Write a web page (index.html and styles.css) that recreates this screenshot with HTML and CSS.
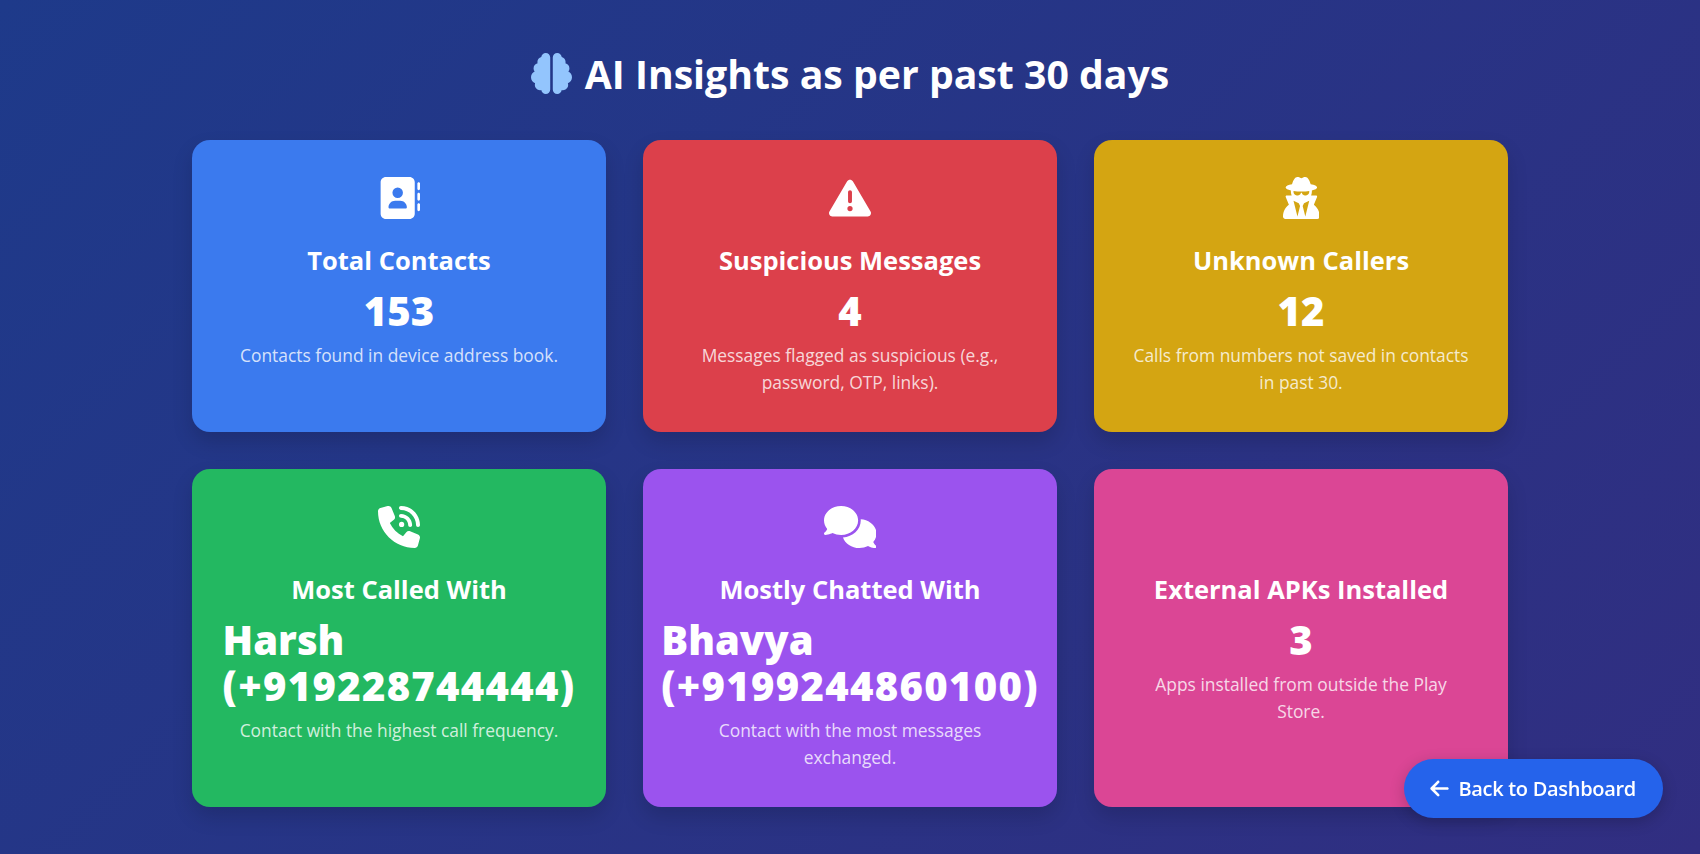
FILE: index.html
```html
<!DOCTYPE html>
<html lang="en">
<head>
    <meta charset="UTF-8">
    <meta name="viewport" content="width=device-width, initial-scale=1.0">
    <title>AI Insights</title>
    <link rel="stylesheet" href="styles.css">
</head>
<body>
    <div class="insights-page">
        <h1 class="page-title">
            <svg class="brain-icon" viewBox="0 0 512 512"><path d="M184 0c30.9 0 56 25.1 56 56V456c0 30.9-25.1 56-56 56c-28.9 0-52.7-21.9-55.7-50.1c-5.2 1.4-10.7 2.1-16.3 2.1c-35.3 0-64-28.7-64-64c0-7.4 1.3-14.6 3.6-21.2C21.4 367.4 0 338.2 0 304c0-31.9 18.7-59.5 45.8-72.3C37.1 220.8 32 207 32 192c0-30.7 21.6-56.3 50.4-62.6C80.8 123.9 80 118 80 112c0-29.9 20.6-55.1 48.3-62.1C131.3 21.9 155.1 0 184 0zM328 0c28.9 0 52.6 21.9 55.7 49.9c27.8 7 48.3 32.1 48.3 62.1c0 6-.8 11.9-2.4 17.4c28.8 6.2 50.4 31.9 50.4 62.6c0 15-5.1 28.8-13.8 39.7C493.3 244.5 512 272.1 512 304c0 34.2-21.4 63.4-51.6 74.8c2.3 6.6 3.6 13.8 3.6 21.2c0 35.3-28.7 64-64 64c-5.6 0-11.1-.7-16.3-2.1c-3 28.2-26.8 50.1-55.7 50.1c-30.9 0-56-25.1-56-56V56c0-30.9 25.1-56 56-56z"/></svg>
            <span>AI Insights as per past 30 days</span>
        </h1>

        <div class="cards-grid">
            <div class="card card-blue">
                <svg class="card-icon" viewBox="0 0 512 512"><path d="M96 0C60.7 0 32 28.7 32 64V448c0 35.3 28.7 64 64 64H384c35.3 0 64-28.7 64-64V64c0-35.3-28.7-64-64-64H96zM208 288h64c44.2 0 80 35.8 80 80c0 8.8-7.2 16-16 16H144c-8.8 0-16-7.2-16-16c0-44.2 35.8-80 80-80zm-32-96a64 64 0 1 1 128 0 64 64 0 1 1 -128 0zM512 80c0-8.8-7.2-16-16-16s-16 7.2-16 16v64c0 8.8 7.2 16 16 16s16-7.2 16-16V80zM496 192c-8.8 0-16 7.2-16 16v64c0 8.8 7.2 16 16 16s16-7.2 16-16V208c0-8.8-7.2-16-16-16zm16 144c0-8.8-7.2-16-16-16s-16 7.2-16 16v64c0 8.8 7.2 16 16 16s16-7.2 16-16V336z"/></svg>
                <h2 class="card-title">Total Contacts</h2>
                <div class="card-value">153</div>
                <p class="card-text">Contacts found in device address book.</p>
            </div>

            <div class="card card-red">
                <svg class="card-icon" viewBox="0 0 512 512"><path d="M256 32c14.2 0 27.3 7.5 34.5 19.8l216 368c7.3 12.4 7.3 27.7 .2 40.1S486.3 480 472 480H40c-14.3 0-27.6-7.7-34.7-20.1s-7-27.8 .2-40.1l216-368C228.7 39.5 241.8 32 256 32zm0 128c-13.3 0-24 10.7-24 24V296c0 13.3 10.7 24 24 24s24-10.7 24-24V184c0-13.3-10.7-24-24-24zm32 224a32 32 0 1 0 -64 0 32 32 0 1 0 64 0z"/></svg>
                <h2 class="card-title">Suspicious Messages</h2>
                <div class="card-value">4</div>
                <p class="card-text">Messages flagged as suspicious (e.g., password, OTP, links).</p>
            </div>

            <div class="card card-yellow">
                <svg class="card-icon" viewBox="0 0 448 512"><path d="M224 16c-6.7 0-10.8-2.8-15.5-6.1C201.9 5.4 194 0 176 0c-30.5 0-52 43.7-66 89.4C62.7 98.1 32 112.2 32 128c0 14.3 25 27.1 64.6 35.9c-.4 4-.6 8-.6 12.1c0 17 3.3 33.2 9.3 48H45.4C38 224 32 230 32 237.4c0 1.7 .3 3.4 1 5l38.8 96.9C28.2 371.8 0 423.8 0 482.3C0 498.7 13.3 512 29.7 512H418.3c16.4 0 29.7-13.3 29.7-29.7c0-58.5-28.2-110.4-71.7-143L415 242.4c.6-1.6 1-3.3 1-5c0-7.4-6-13.4-13.4-13.4H342.7c6-14.8 9.3-31 9.3-48c0-4.1-.2-8.1-.6-12.1C391 155.1 416 142.3 416 128c0-15.8-30.7-29.9-78-38.6C324 43.7 302.5 0 272 0c-18 0-25.9 5.4-32.5 9.9c-4.8 3.3-8.8 6.1-15.5 6.1zm56 208H267.6c-16.5 0-31.1-10.6-36.3-26.2c-2.3-7-12.2-7-14.5 0c-5.2 15.6-19.9 26.2-36.3 26.2H168c-22.1 0-40-17.9-40-40V169.6c28.2 4.1 61 6.4 96 6.4s67.8-2.3 96-6.4V184c0 22.1-17.9 40-40 40zm-88 96l16 32L176 480 128 288l64 32zm128-32L272 480 240 352l16-32 64-32z"/></svg>
                <h2 class="card-title">Unknown Callers</h2>
                <div class="card-value">12</div>
                <p class="card-text">Calls from numbers not saved in contacts in past 30.</p>
            </div>

            <div class="card card-green">
                <svg class="card-icon" viewBox="0 0 512 512"><path d="M280 0C408.1 0 512 103.9 512 232c0 13.3-10.7 24-24 24s-24-10.7-24-24c0-101.6-82.4-184-184-184c-13.3 0-24-10.7-24-24s10.7-24 24-24zm8 192a32 32 0 1 1 0 64 32 32 0 1 1 0-64zm-32-72c0-13.3 10.7-24 24-24c75.1 0 136 60.9 136 136c0 13.3-10.7 24-24 24s-24-10.7-24-24c0-48.6-39.4-88-88-88c-13.3 0-24-10.7-24-24zM117.5 1.4c19.4-5.3 39.7 4.6 47.4 23.2l40 96c6.8 16.3 2.1 35.2-11.6 46.3L144 207.3c33.3 70.4 90.3 127.4 160.7 160.7L345 318.7c11.2-13.7 30-18.4 46.3-11.6l96 40c18.6 7.7 28.5 28 23.2 47.4l-24 88C481.8 499.9 466 512 448 512C200.6 512 0 311.4 0 64C0 46 12.1 30.2 29.5 25.4l88-24z"/></svg>
                <h2 class="card-title">Most Called With</h2>
                <div class="card-value">Harsh<br><span class="card-phone">(+919228744444)</span></div>
                <p class="card-text">Contact with the highest call frequency.</p>
            </div>

            <div class="card card-purple">
                <svg class="card-icon" viewBox="0 0 640 512"><path d="M208 352c114.9 0 208-78.8 208-176S322.9 0 208 0S0 78.8 0 176c0 38.6 14.7 74.3 39.6 103.4c-3.5 9.4-8.7 17.7-14.2 24.7c-4.8 6.2-9.7 11-13.3 14.3c-1.8 1.6-3.3 2.9-4.3 3.7c-.5 .4-.9 .7-1.1 .8l-.2 .2 0 0 0 0C1 327.2-1.4 334.4 .8 340.9S9.1 352 16 352c21.8 0 43.8-5.6 62.1-12.5c9.2-3.5 17.8-7.4 25.3-11.4C134.1 343.3 169.8 352 208 352zM448 176c0 112.3-99.1 196.9-216.5 207C255.8 457.4 336.4 512 432 512c38.2 0 73.9-8.7 104.7-23.9c7.5 4 16 7.9 25.2 11.4c18.3 6.9 40.3 12.5 62.1 12.5c6.9 0 13.1-4.5 15.2-11.1c2.1-6.6-.2-13.8-5.8-17.9l0 0 0 0-.2-.2c-.2-.2-.6-.4-1.1-.8c-1-.8-2.5-2-4.3-3.7c-3.6-3.3-8.5-8.1-13.3-14.3c-5.5-7-10.7-15.4-14.2-24.7c24.9-29 39.6-64.7 39.6-103.4c0-92.8-84.9-168.9-192.6-175.5c.4 5.1 .6 10.3 .6 15.5z"/></svg>
                <h2 class="card-title">Mostly Chatted With</h2>
                <div class="card-value">Bhavya<br><span class="card-phone">(+9199244860100)</span></div>
                <p class="card-text">Contact with the most messages exchanged.</p>
            </div>

            <div class="card card-pink">
                <div class="card-icon"></div>
                <h2 class="card-title">External APKs Installed</h2>
                <div class="card-value">3</div>
                <p class="card-text">Apps installed from outside the Play Store.</p>
            </div>
        </div>
    </div>

    <a class="back-button" href="#">
        <svg class="back-icon" viewBox="0 0 448 512"><path d="M9.4 233.4c-12.5 12.5-12.5 32.8 0 45.3l160 160c12.5 12.5 32.8 12.5 45.3 0s12.5-32.8 0-45.3L109.2 288 416 288c17.7 0 32-14.3 32-32s-14.3-32-32-32l-306.7 0L214.6 118.6c12.5-12.5 12.5-32.8 0-45.3s-32.8-12.5-45.3 0l-160 160z"/></svg>
        <span>Back to Dashboard</span>
    </a>
</body>
</html>
```

FILE: styles.css
```css
* {
    box-sizing: border-box;
}

body {
    margin: 0;
    min-height: 100vh;
    font-family: 'Open Sans', 'Noto Sans', sans-serif;
    background: linear-gradient(135deg, #1e3a8a, #312e81);
    color: #fff;
}

.insights-page {
    width: 1316px;
    margin: 0 auto;
    padding: 46px 0 46px;
}

.page-title {
    display: flex;
    justify-content: center;
    align-items: center;
    gap: 13px;
    height: 55px;
    margin: 0 0 39px;
    font-size: 39.2px;
    font-weight: 700;
}

.brain-icon {
    width: 41px;
    height: 41px;
    fill: #93c5fd;
}

.cards-grid {
    display: grid;
    grid-template-columns: repeat(3, 414px);
    justify-content: space-between;
    row-gap: 37px;
}

.card {
    display: flex;
    flex-direction: column;
    align-items: center;
    padding: 37px 39px 36px;
    border-radius: 18px;
    text-align: center;
    box-shadow: 0 10px 20px rgba(0, 0, 0, 0.15);
}

.card-blue { background-color: #3b7aee; }
.card-red { background-color: #dc404b; }
.card-yellow { background-color: #d4a512; }
.card-green { background-color: #23b861; }
.card-purple { background-color: #9b53ee; }
.card-pink { background-color: #db4695; }

.card-icon {
    height: 42px;
    fill: #fff;
    margin-bottom: 24px;
}

.card-title {
    margin: 0 0 11px;
    font-size: 25.5px;
    line-height: 34px;
    font-weight: 700;
    white-space: nowrap;
}

.card-value {
    margin-bottom: 8px;
    font-size: 40px;
    line-height: 46px;
    font-weight: 800;
    text-align: left;
    white-space: nowrap;
}

.card-phone {
    letter-spacing: 1.3px;
}

.card-text {
    margin: 0;
    font-size: 17.4px;
    line-height: 27px;
    color: rgba(255, 255, 255, 0.8);
}

.back-button {
    position: fixed;
    right: 37px;
    bottom: 36px;
    display: flex;
    align-items: center;
    gap: 9px;
    height: 59px;
    padding: 0 27px 0 26px;
    border-radius: 30px;
    background-color: #2563eb;
    color: #fff;
    font-size: 20px;
    font-weight: 600;
    letter-spacing: -0.3px;
    text-decoration: none;
    box-shadow: 0 4px 15px rgba(0, 0, 0, 0.2);
}

.back-icon {
    width: 19px;
    height: 21px;
    fill: #fff;
}
```
